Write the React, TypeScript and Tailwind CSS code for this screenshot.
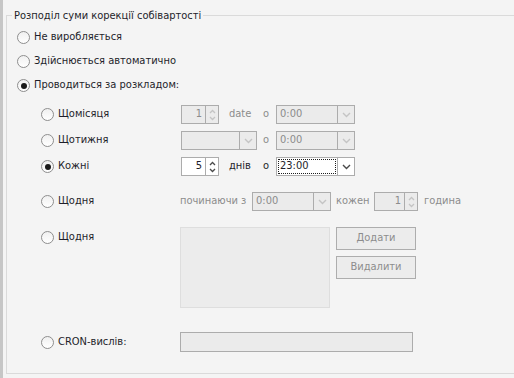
import React from 'react'

const font = { fontFamily: '"DejaVu Sans Condensed", "DejaVu Sans", Verdana, sans-serif' }

function Radio({ checked = false }: { checked?: boolean }) {
  return (
    <span className="flex h-[13px] w-[13px] shrink-0 items-center justify-center rounded-full border border-[#8e8e8e] bg-gradient-to-b from-[#f0f0f0] to-[#ffffff]">
      {checked && <span className="h-[6px] w-[6px] rounded-full bg-[#1a1a1a]" />}
    </span>
  )
}

function UpDown({ enabled }: { enabled: boolean }) {
  const c = enabled ? '#4a4a4a' : '#c4c4c4'
  return (
    <svg width="9" height="14" viewBox="0 0 9 14">
      <path d="M2 5 L4.5 2.5 L7 5" fill="none" stroke={c} strokeWidth="1.3" />
      <path d="M2 9 L4.5 11.5 L7 9" fill="none" stroke={c} strokeWidth="1.3" />
    </svg>
  )
}

function Chevron({ enabled }: { enabled: boolean }) {
  const c = enabled ? '#4a4a4a' : '#c4c4c4'
  return (
    <svg width="9" height="6" viewBox="0 0 9 6">
      <path d="M1 1 L4.5 4.5 L8 1" fill="none" stroke={c} strokeWidth="1.4" />
    </svg>
  )
}

function Spinner({ value, enabled = false, width = 'w-[38px]' }: { value: string; enabled?: boolean; width?: string }) {
  return (
    <div
      className={`flex h-[19px] ${width} border border-[#acacac] ${enabled ? 'bg-white text-[#1e1e2a]' : 'bg-[#ebebeb] text-[#8c8c8c]'}`}
    >
      <div className="flex flex-1 items-center justify-end pr-[3px]">{value}</div>
      <div className="flex w-[13px] items-center justify-center border-l border-[#acacac]">
        <UpDown enabled={enabled} />
      </div>
    </div>
  )
}

function Select({ value, enabled = false, width = 'w-[79px]' }: { value?: string; enabled?: boolean; width?: string }) {
  return (
    <div
      className={`flex h-[19px] ${width} border border-[#acacac] ${enabled ? 'bg-white text-[#1e1e2a]' : 'bg-[#ebebeb] text-[#8c8c8c]'}`}
    >
      <div className="flex flex-1 items-center px-[1px]">
        {enabled ? (
          <span className="flex h-[15px] w-full items-center border border-dotted border-[#1e1e1e] pl-[1px]">{value}</span>
        ) : (
          <span className="pl-[2px]">{value}</span>
        )}
      </div>
      <div className="flex w-[17px] items-center justify-center border-l border-[#acacac]">
        <Chevron enabled={enabled} />
      </div>
    </div>
  )
}

function SubRow({ label, checked = false, children, className = '' }: { label: string; checked?: boolean; children?: React.ReactNode; className?: string }) {
  return (
    <div className={`flex h-[19px] items-center ${className}`}>
      <div className="flex w-[139px] items-center gap-[4px]">
        <Radio checked={checked} />
        <span>{label}</span>
      </div>
      {children}
    </div>
  )
}

export default function App() {
  return (
    <div className="flex h-[378px] w-[514px] overflow-hidden bg-[#f4f4f4] text-[11px] text-[#1e1e2a]" style={font}>
      <div className="w-[3px] shrink-0 bg-[#c6c6c6]" />
      <div className="pl-[3px] pt-[8px]">
        <fieldset className="h-[366px] w-[520px] border border-[#dadada]">
          <legend className="ml-[5px] px-[2px] leading-[15px]">Розподіл суми корекції собівартості</legend>
          <div className="pl-[10px] pt-[2px]">
            <div className="flex h-[24px] items-center gap-[4px]">
              <Radio />
              <span>Не виробляється</span>
            </div>
            <div className="flex h-[24px] items-center gap-[4px]">
              <Radio />
              <span>Здійснюється автоматично</span>
            </div>
            <div className="flex h-[25px] items-center gap-[4px]">
              <Radio checked />
              <span>Проводиться за розкладом:</span>
            </div>

            <div className="pl-[24px]">
              <SubRow label="Щомісяця" className="mt-[7px]">
                <div className="ml-[1px]">
                  <Spinner value="1" />
                </div>
                <span className="ml-[10px] w-[34px] text-[#8c8c8c]">date</span>
                <span className="w-[13px] text-[#8c8c8c]">o</span>
                <Select value="0:00" />
              </SubRow>

              <SubRow label="Щотижня" className="mt-[7px]">
                <div className="ml-[1px]">
                  <Select width="w-[76px]" />
                </div>
                <span className="ml-[6px] w-[13px] text-[#8c8c8c]">o</span>
                <Select value="0:00" />
              </SubRow>

              <SubRow label="Кожні" checked className="mt-[7px]">
                <div className="ml-[1px]">
                  <Spinner value="5" enabled />
                </div>
                <span className="ml-[10px] w-[34px]">днів</span>
                <span className="w-[13px]">o</span>
                <Select value="23:00" enabled />
              </SubRow>

              <SubRow label="Щодня" className="mt-[16px]">
                <span className="w-[72px] text-[#8c8c8c]">починаючи з</span>
                <Select value="0:00" />
                <span className="ml-[5px] w-[38px] text-[#8c8c8c]">кожен</span>
                <Spinner value="1" width="w-[44px]" />
                <span className="ml-[6px] text-[#8c8c8c]">година</span>
              </SubRow>

              <div className="mt-[16px] flex items-start">
                <div className="flex h-[20px] w-[139px] items-center gap-[4px]">
                  <Radio />
                  <span>Щодня</span>
                </div>
                <div className="h-[81px] w-[150px] border border-[#dedede] bg-[#ececec]" />
                <div className="ml-[6px] flex flex-col gap-[6px]">
                  <button className="h-[23px] w-[80px] border border-[#adadad] bg-[#ececec] text-[#8c8c8c]">Додати</button>
                  <button className="h-[23px] w-[80px] border border-[#adadad] bg-[#ececec] text-[#8c8c8c]">Видалити</button>
                </div>
              </div>

              <div className="mt-[24px] flex h-[20px] items-center">
                <div className="flex w-[139px] items-center gap-[4px]">
                  <Radio />
                  <span>CRON-вислів:</span>
                </div>
                <div className="h-[20px] w-[233px] border border-[#acacac] bg-[#ebebeb]" />
              </div>
            </div>
          </div>
        </fieldset>
      </div>
    </div>
  )
}
